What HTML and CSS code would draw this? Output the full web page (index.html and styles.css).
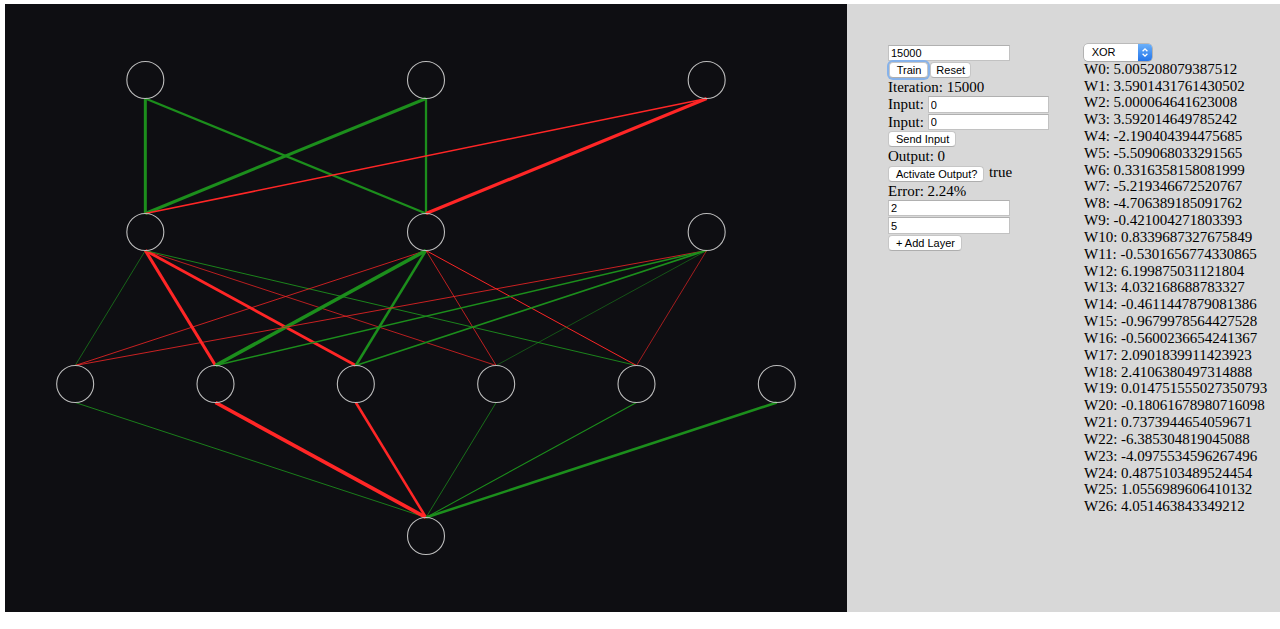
FILE: index.html
```html
<!DOCTYPE html>
<html>
<head>
<meta charset="utf-8">
<title>Neural Network</title>
<link rel="stylesheet" href="styles.css">
</head>
<body>
<div class="app">
  <div class="stage">
    <svg class="net" width="842" height="608" viewBox="0 0 842 608">
      <g class="edges">
        <line class="pos" x1="140.33" y1="94.5" x2="140.33" y2="209.5" stroke-width="3"/>
        <line class="pos" x1="140.33" y1="94.5" x2="421" y2="209.5" stroke-width="2.3"/>
        <line class="pos" x1="421" y1="94.5" x2="140.33" y2="209.5" stroke-width="3"/>
        <line class="pos" x1="421" y1="94.5" x2="421" y2="209.5" stroke-width="2.3"/>
        <line class="neg" x1="701.67" y1="94.5" x2="140.33" y2="209.5" stroke-width="1.6"/>
        <line class="neg" x1="701.67" y1="94.5" x2="421" y2="209.5" stroke-width="3.25"/>

        <line class="pos" x1="140.33" y1="246.5" x2="70.17" y2="361.5" stroke-width="0.67"/>
        <line class="neg" x1="140.33" y1="246.5" x2="210.5" y2="361.5" stroke-width="3.1"/>
        <line class="neg" x1="140.33" y1="246.5" x2="350.83" y2="361.5" stroke-width="2.85"/>
        <line class="neg" x1="140.33" y1="246.5" x2="491.17" y2="361.5" stroke-width="0.71"/>
        <line class="pos" x1="140.33" y1="246.5" x2="631.5" y2="361.5" stroke-width="0.92"/>
        <line class="neg" x1="421" y1="246.5" x2="70.17" y2="361.5" stroke-width="0.77"/>
        <line class="pos" x1="421" y1="246.5" x2="210.5" y2="361.5" stroke-width="3.6"/>
        <line class="pos" x1="421" y1="246.5" x2="350.83" y2="361.5" stroke-width="2.52"/>
        <line class="neg" x1="421" y1="246.5" x2="491.17" y2="361.5" stroke-width="0.73"/>
        <line class="neg" x1="421" y1="246.5" x2="631.5" y2="361.5" stroke-width="0.98"/>
        <line class="neg" x1="701.67" y1="246.5" x2="70.17" y2="361.5" stroke-width="0.78"/>
        <line class="pos" x1="701.67" y1="246.5" x2="210.5" y2="361.5" stroke-width="1.55"/>
        <line class="pos" x1="701.67" y1="246.5" x2="350.83" y2="361.5" stroke-width="1.7"/>
        <line class="pos" x1="701.67" y1="246.5" x2="491.17" y2="361.5" stroke-width="0.55"/>
        <line class="neg" x1="701.67" y1="246.5" x2="631.5" y2="361.5" stroke-width="0.62"/>

        <line class="pos" x1="70.17" y1="398.5" x2="421" y2="513.5" stroke-width="0.87"/>
        <line class="neg" x1="210.5" y1="398.5" x2="421" y2="513.5" stroke-width="3.7"/>
        <line class="neg" x1="350.83" y1="398.5" x2="421" y2="513.5" stroke-width="2.55"/>
        <line class="pos" x1="491.17" y1="398.5" x2="421" y2="513.5" stroke-width="0.75"/>
        <line class="pos" x1="631.5" y1="398.5" x2="421" y2="513.5" stroke-width="1.03"/>
        <line class="pos" x1="771.83" y1="398.5" x2="421" y2="513.5" stroke-width="2.53"/>
      </g>
      <g class="nodes">
        <circle cx="140.33" cy="76" r="18.5"/>
        <circle cx="421" cy="76" r="18.5"/>
        <circle cx="701.67" cy="76" r="18.5"/>
        <circle cx="140.33" cy="228" r="18.5"/>
        <circle cx="421" cy="228" r="18.5"/>
        <circle cx="701.67" cy="228" r="18.5"/>
        <circle cx="70.17" cy="380" r="18.5"/>
        <circle cx="210.5" cy="380" r="18.5"/>
        <circle cx="350.83" cy="380" r="18.5"/>
        <circle cx="491.17" cy="380" r="18.5"/>
        <circle cx="631.5" cy="380" r="18.5"/>
        <circle cx="771.83" cy="380" r="18.5"/>
        <circle cx="421" cy="532" r="18.5"/>
      </g>
    </svg>
  </div>

  <div class="panel">
    <div class="controls">
      <div class="row"><input class="field wide" type="text" value="15000"></div>
      <div class="row btns">
        <button class="btn focused" type="button">Train</button>
        <button class="btn tight" type="button">Reset</button>
      </div>
      <div class="row text">Iteration: 15000</div>
      <div class="row text"><span class="lbl">Input:</span><input class="field narrow" type="text" value="0"></div>
      <div class="row text"><span class="lbl">Input:</span><input class="field narrow" type="text" value="0"></div>
      <div class="row"><button class="btn" type="button">Send Input</button></div>
      <div class="row text">Output: 0</div>
      <div class="row"><button class="btn" type="button">Activate Output?</button><span class="flag">true</span></div>
      <div class="row text">Error: 2.24%</div>
      <div class="row"><input class="field wide" type="text" value="2"></div>
      <div class="row"><input class="field wide" type="text" value="5"></div>
      <div class="row"><button class="btn" type="button">+ Add Layer</button></div>
    </div>

    <div class="weights">
      <div class="select">
        <span class="sel-text">XOR</span>
        <span class="sel-arrow">
          <svg width="8" height="11" viewBox="0 0 8 11"><path d="M1.6 4.2 L4 1.8 L6.4 4.2 M1.6 6.8 L4 9.2 L6.4 6.8" fill="none" stroke="#fff" stroke-width="1.3"/></svg>
        </span>
      </div>
      <div class="w">W0: 5.005208079387512</div>
      <div class="w">W1: 3.5901431761430502</div>
      <div class="w">W2: 5.000064641623008</div>
      <div class="w">W3: 3.592014649785242</div>
      <div class="w">W4: -2.190404394475685</div>
      <div class="w">W5: -5.509068033291565</div>
      <div class="w">W6: 0.3316358158081999</div>
      <div class="w">W7: -5.219346672520767</div>
      <div class="w">W8: -4.706389185091762</div>
      <div class="w">W9: -0.421004271803393</div>
      <div class="w">W10: 0.8339687327675849</div>
      <div class="w">W11: -0.5301656774330865</div>
      <div class="w">W12: 6.199875031121804</div>
      <div class="w">W13: 4.032168688783327</div>
      <div class="w">W14: -0.4611447879081386</div>
      <div class="w">W15: -0.9679978564427528</div>
      <div class="w">W16: -0.5600236654241367</div>
      <div class="w">W17: 2.0901839911423923</div>
      <div class="w">W18: 2.4106380497314888</div>
      <div class="w">W19: 0.014751555027350793</div>
      <div class="w">W20: -0.18061678980716098</div>
      <div class="w">W21: 0.7373944654059671</div>
      <div class="w">W22: -6.385304819045088</div>
      <div class="w">W23: -4.0975534596267496</div>
      <div class="w">W24: 0.4875103489524454</div>
      <div class="w">W25: 1.0556989606410132</div>
      <div class="w">W26: 4.051463843349212</div>
    </div>
  </div>
</div>
</body>
</html>
```

FILE: styles.css
```css
html, body {
  margin: 0;
  padding: 0;
  background: #ffffff;
}

body {
  font-family: "Liberation Serif", "Times New Roman", serif;
  font-size: 15px;
  color: #000;
}

.app {
  display: flex;
  padding: 4px 0 0 5px;
}

.stage {
  flex: none;
  width: 842px;
  height: 608px;
  background: #0e0e12;
}

.net {
  display: block;
}

.edges line {
  stroke-linecap: butt;
}

.pos {
  stroke: #1c8e1c;
}

.neg {
  stroke: #ff2626;
}

.nodes circle {
  fill: none;
  stroke: #bdbdbd;
  stroke-width: 1.1;
}

.panel {
  flex: 1;
  height: 608px;
  box-sizing: border-box;
  background: #d8d8d8;
  display: flex;
  padding: 40px 0 0 41px;
}

.controls {
  flex: none;
  width: 196px;
  display: flex;
  flex-direction: column;
  padding-top: 0.5px;
}

.row {
  flex: none;
  height: 17.3px;
  display: flex;
  align-items: flex-start;
  white-space: nowrap;
}

.text {
  line-height: 16px;
}

.btns {
  gap: 1.5px;
  padding-left: 0.7px;
}

.lbl {
  width: 39.7px;
  flex: none;
}

.field {
  box-sizing: border-box;
  height: 16.3px;
  margin: 0;
  padding: 0 2px;
  border: 1px solid #c2c2c2;
  border-top-color: #b0b0b0;
  background: #fff;
  font-family: "Liberation Sans", Arial, sans-serif;
  font-size: 11px;
  color: #000;
  outline: none;
}

.wide {
  width: 122px;
}

.narrow {
  width: 121.3px;
}

.btn {
  box-sizing: border-box;
  height: 16px;
  margin: 0;
  padding: 0 6px 0 7px;
  border: 1px solid #c6c6c6;
  border-bottom-color: #aeaeae;
  border-radius: 4px;
  background: #fff;
  font-family: "Liberation Sans", Arial, sans-serif;
  font-size: 11px;
  line-height: 14px;
  color: #000;
}

.tight {
  padding: 0 5px 0 5.5px;
}

.focused {
  box-shadow: 0 0 0 2px #86b2ea;
}

.flag {
  margin-left: 4.6px;
  line-height: 13px;
}

.weights {
  display: flex;
  flex-direction: column;
}

.select {
  box-sizing: border-box;
  width: 67.7px;
  height: 16.7px;
  display: flex;
  background: #fff;
  border-radius: 4px;
  box-shadow: 0 0 0 0.6px rgba(0, 0, 0, 0.28), 0 1px 1px rgba(0, 0, 0, 0.08);
  font-family: "Liberation Sans", Arial, sans-serif;
  font-size: 11px;
  line-height: 16.7px;
  overflow: hidden;
}

.sel-text {
  flex: 1;
  padding-left: 7.7px;
}

.sel-arrow {
  flex: none;
  width: 13.5px;
  display: flex;
  align-items: center;
  justify-content: center;
  background: linear-gradient(#6bb0fa, #2375ea);
}

.w {
  height: 16.83px;
  line-height: 16.83px;
  white-space: nowrap;
}
```
